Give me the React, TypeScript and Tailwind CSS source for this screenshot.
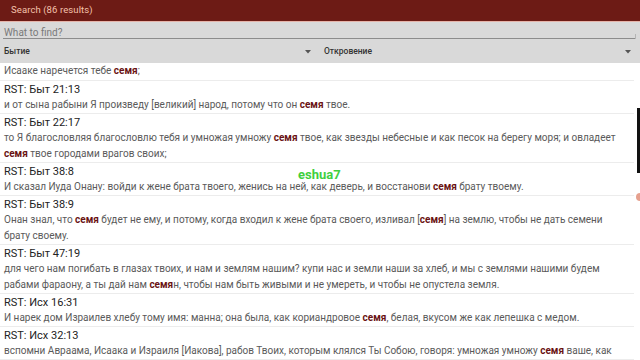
import React from "react";

type Seg = string | { b: string };
type Item = { title?: string; lines: Seg[][] };

const S = (t: string): Seg => ({ b: t });

const items: Item[] = [
  { title: "RST: Быт 21:13", lines: [["и от сына рабыни Я произведу [великий] народ, потому что он ", S("семя"), " твое."]] },
  {
    title: "RST: Быт 22:17",
    lines: [
      ["то Я благословляя благословлю тебя и умножая умножу ", S("семя"), " твое, как звезды небесные и как песок на берегу моря; и овладеет"],
      [S("семя"), " твое городами врагов своих;"],
    ],
  },
  { title: "RST: Быт 38:8", lines: [["И сказал Иуда Онану: войди к жене брата твоего, женись на ней, как деверь, и восстанови ", S("семя"), " брату твоему."]] },
  {
    title: "RST: Быт 38:9",
    lines: [
      ["Онан знал, что ", S("семя"), " будет не ему, и потому, когда входил к жене брата своего, изливал [", S("семя"), "] на землю, чтобы не дать семени"],
      ["брату своему."],
    ],
  },
  {
    title: "RST: Быт 47:19",
    lines: [
      ["для чего нам погибать в глазах твоих, и нам и землям нашим? купи нас и земли наши за хлеб, и мы с землями нашими будем"],
      ["рабами фараону, а ты дай нам ", S("семя"), "н, чтобы нам быть живыми и не умереть, и чтобы не опустела земля."],
    ],
  },
  { title: "RST: Исх 16:31", lines: [["И нарек дом Израилев хлебу тому имя: манна; она была, как кориандровое ", S("семя"), ", белая, вкусом же как лепешка с медом."]] },
  {
    title: "RST: Исх 32:13",
    lines: [
      ["вспомни Авраама, Исаака и Израиля [Иакова], рабов Твоих, которым клялся Ты Собою, говоря: умножая умножу ", S("семя"), " ваше, как"],
    ],
  },
];

function Line({ segs }: { segs: Seg[] }) {
  return (
    <div className="whitespace-nowrap leading-[16px]">
      {segs.map((s, i) =>
        typeof s === "string" ? (
          <span key={i}>{s}</span>
        ) : (
          <span key={i} className="font-bold text-[#6a1313]">
            {s.b}
          </span>
        )
      )}
    </div>
  );
}

function Triangle() {
  return (
    <svg width="6" height="4" viewBox="0 0 6 4" className="block">
      <path d="M0 0 L6 0 L3 3.5 Z" fill="#555" />
    </svg>
  );
}

export default function App() {
  return (
    <div
      className="relative w-[640px] h-[360px] overflow-hidden bg-white"
      style={{ fontFamily: "Roboto, 'Noto Sans', sans-serif" }}
    >
      {/* header */}
      <div className="h-[21px] bg-[#6d1b15] flex items-center pl-[11px]">
        <span className="text-[9.5px] text-[#f4c2ac] tracking-[0.1px]">Search (86 results)</span>
      </div>
      <div className="h-px bg-[#e6b4aa]" />
      {/* search panel */}
      <div className="bg-[#d9d9d9] h-[41px] flex flex-col">
        <div className="ml-[3px] mr-[5px] h-[17px] border-b border-[#8c8c8c] flex items-end pl-px relative">
          <span className="text-[10px] text-[#7a7a7a] leading-[11px]">What to find?</span>
          <div className="absolute right-[-1px] bottom-[-1px] w-px h-[5px] bg-[#b5b5b5]" />
        </div>
        <div className="flex flex-1 items-center pt-px">
          <div className="w-[320px] flex items-center justify-between pl-[4px] pr-[9px]">
            <span className="text-[8.5px] font-medium text-[#333]">Бытие</span>
            <Triangle />
          </div>
          <div className="w-[320px] flex items-center justify-between pl-[4px] pr-[9px]">
            <span className="text-[8.5px] font-medium text-[#333]">Откровение</span>
            <Triangle />
          </div>
        </div>
      </div>
      {/* list */}
      <div className="text-[10px] text-[#5a5a5a]">
        <div className="px-[4px] pb-[2px] border-b border-[#ececec] mr-[6px]">
          <div className="leading-[15px] whitespace-nowrap">
            Исааке наречется тебе <span className="font-bold text-[#6a1313]">семя</span>;
          </div>
        </div>
        {items.map((it, i) => (
          <div key={i} className="px-[4px] pt-[2px] border-b border-[#ececec] mr-[6px]">
            <div className="text-[11px] text-[#222] leading-[14px]">{it.title}</div>
            {it.lines.map((l, j) => (
              <Line key={j} segs={l} />
            ))}
          </div>
        ))}
      </div>
      {/* watermark */}
      <div className="absolute left-[298px] top-[167px] text-[13px] font-bold text-[#3fcf3f] leading-[16px]">eshua7</div>
      {/* scrollbar */}
      <div className="absolute right-0 top-[108px] w-[3px] h-[65px] bg-[#111]" />
      <div className="absolute right-[-4px] top-[193px] w-[8px] h-[8px] rounded-full bg-[#e6a08e]" />
    </div>
  );
}
